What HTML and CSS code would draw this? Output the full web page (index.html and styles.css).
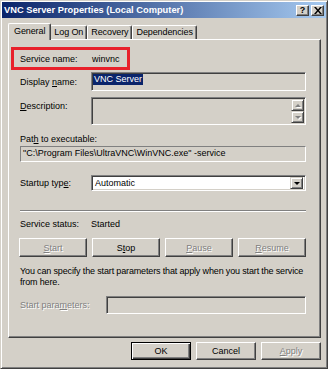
FILE: index.html
```html
<!DOCTYPE html>
<html lang="en">
<head>
    <meta charset="UTF-8">
    <title>VNC Server Properties (Local Computer)</title>
    <link rel="stylesheet" href="styles.css">
</head>
<body>
    <div class="window">
        <div class="titlebar">
            <span class="title">VNC Server Properties (Local Computer)</span>
            <div class="caption-btns">
                <span class="cap-btn help">?</span>
                <span class="cap-btn">
                    <svg width="8" height="7" viewBox="0 0 8 7"><path d="M0 0h2l2 2.5L6 0h2L5 3.5 8 7H6L4 4.5 2 7H0l3-3.5z" fill="#000"/></svg>
                </span>
            </div>
        </div>

        <div class="content">
            <div class="tabs">
                <div class="tab active">General</div>
                <div class="tab">Log On</div>
                <div class="tab">Recovery</div>
                <div class="tab">Dependencies</div>
            </div>

            <div class="panel">
                <div class="row service-name">
                    <span class="label">Service name:</span>
                    <span>winvnc</span>
                </div>

                <div class="row display-row">
                    <span class="label">Display <u>n</u>ame:</span>
                    <div class="field sunken grey display-field"><span class="selected">VNC Server</span></div>
                </div>

                <div class="row desc-row">
                    <span class="label desc-label"><u>D</u>escription:</span>
                    <div class="field sunken grey desc-field">
                        <div class="scrollbar">
                            <span class="scroll-btn"><span class="arrow up"></span></span>
                            <span class="scroll-btn"><span class="arrow down"></span></span>
                        </div>
                    </div>
                </div>

                <div class="path-label">Pat<u>h</u> to executable:</div>
                <div class="path-field">"C:\Program Files\UltraVNC\WinVNC.exe" -service</div>

                <div class="row startup-row">
                    <span class="label">Startup typ<u>e</u>:</span>
                    <div class="field sunken combo">
                        <span class="combo-text">Automatic</span>
                        <span class="combo-btn"><span class="arrow down black"></span></span>
                    </div>
                </div>

                <div class="separator"></div>

                <div class="row status-row">
                    <span class="label">Service status:</span>
                    <span>Started</span>
                </div>

                <div class="service-btns">
                    <button class="btn" disabled><u>S</u>tart</button>
                    <button class="btn">S<u>t</u>op</button>
                    <button class="btn" disabled><u>P</u>ause</button>
                    <button class="btn" disabled><u>R</u>esume</button>
                </div>

                <p class="hint">You can specify the start parameters that apply when you start the service<br>from here.</p>

                <div class="row params-row">
                    <span class="label params-label disabled">Start para<u>m</u>eters:</span>
                    <div class="field sunken grey params-field"></div>
                </div>
            </div>

            <div class="footer">
                <button class="btn default">OK</button>
                <button class="btn">Cancel</button>
                <button class="btn" disabled><u>A</u>pply</button>
            </div>
        </div>
    </div>
</body>
</html>
```

FILE: styles.css
```css
body {
    margin: 0;
    background: #d4d0c8;
    font-family: "Liberation Sans", Arial, sans-serif;
    font-size: 9px;
    color: #000;
}
.window {
    width: 328px;
    height: 369px;
    box-sizing: border-box;
    background: #d4d0c8;
    border: 1px solid;
    border-color: #d4d0c8 #404040 #404040 #d4d0c8;
    box-shadow: inset 1px 1px #fff, inset -1px -1px #808080;
    padding: 1px;
    display: flex;
    flex-direction: column;
}
.titlebar {
    height: 16px;
    background: linear-gradient(to right, #0a246a, #a6caf0);
    display: flex;
    align-items: center;
    justify-content: space-between;
    padding: 0 2px 0 2px;
}
.title {
    color: #fff;
    font-weight: bold;
    font-size: 9.3px;
}
.caption-btns {
    display: flex;
    gap: 2px;
}
.cap-btn {
    width: 13px;
    height: 11px;
    box-sizing: border-box;
    background: #d4d0c8;
    border: 1px solid;
    border-color: #fff #404040 #404040 #fff;
    box-shadow: inset -1px -1px #808080;
    display: flex;
    align-items: center;
    justify-content: center;
    font-weight: bold;
    font-size: 9px;
    line-height: 9px;
}
.content {
    flex: 1;
    display: flex;
    flex-direction: column;
    padding: 0 5px 0 6px;
}
.tabs {
    display: flex;
    align-items: flex-end;
    height: 21px;
    padding-left: 1px;
}
.tab {
    height: 14px;
    box-sizing: border-box;
    padding: 0 3px;
    line-height: 12px;
    letter-spacing: -0.1px;
    border-top: 1px solid #fff;
    border-left: 1px solid #fff;
    border-right: 1px solid #404040;
    box-shadow: inset -1px 0 #808080;
    border-radius: 2px 2px 0 0;
    background: #d4d0c8;
}
.tab.active {
    height: 17px;
    margin: 0 -2px -1px -1px;
    padding: 0 5px;
    line-height: 14px;
    position: relative;
    z-index: 1;
}
.tab.active + .tab {
    margin-left: 1px;
}
.panel {
    flex: 1;
    border: 1px solid;
    border-color: #fff #404040 #404040 #fff;
    box-shadow: inset -1px -1px #808080;
    padding: 7px 14px 0 11px;
    display: flex;
    flex-direction: column;
}
.row {
    display: flex;
    align-items: center;
}
.label {
    width: 71px;
    flex-shrink: 0;
}
.service-name {
    width: 119px;
    height: 23px;
    box-sizing: border-box;
    margin-left: -9px;
    border: 3px solid #e8202a;
    padding-left: 6px;
}
.service-name .label {
    width: 72px;
}
.field {
    flex: 1;
    box-sizing: border-box;
}
.sunken {
    border: 1px solid;
    border-color: #808080 #fff #fff #808080;
    box-shadow: inset 1px 1px #404040, inset -1px -1px #d4d0c8;
}
.grey {
    background: #d4d0c8;
}
.display-row {
    margin-top: 2px;
}
.display-field {
    height: 19px;
    padding: 1px 0 0 1px;
    line-height: 11px;
}
.selected {
    background: #0a246a;
    color: #fff;
    padding: 0 1px;
    display: inline-block;
}
.desc-row {
    margin-top: 6px;
    align-items: flex-start;
}
.desc-label {
    padding-top: 4px;
}
.desc-field {
    height: 28px;
    display: flex;
    justify-content: flex-end;
    padding: 1px 1px 1px 0;
}
.scrollbar {
    display: flex;
    flex-direction: column;
    width: 13px;
}
.scroll-btn, .combo-btn {
    flex: 1;
    box-sizing: border-box;
    background: #d4d0c8;
    border: 1px solid;
    border-color: #d4d0c8 #404040 #404040 #d4d0c8;
    box-shadow: inset 1px 1px #fff, inset -1px -1px #808080;
    display: flex;
    align-items: center;
    justify-content: center;
}
.arrow {
    width: 0;
    height: 0;
    border-left: 3px solid transparent;
    border-right: 3px solid transparent;
}
.arrow.up {
    border-bottom: 3px solid #808080;
    filter: drop-shadow(1px 1px 0 #fff);
}
.arrow.down {
    border-top: 3px solid #808080;
    filter: drop-shadow(1px 1px 0 #fff);
}
.arrow.down.black {
    border-top-color: #000;
    filter: none;
}
.path-label {
    margin-top: 8px;
    line-height: 12px;
}
.path-field {
    margin-top: 1px;
    height: 16px;
    box-sizing: border-box;
    border: 1px solid;
    border-color: #808080 #fff #fff #808080;
    padding-left: 2px;
    line-height: 13px;
}
.startup-row {
    margin-top: 13px;
}
.combo {
    height: 16px;
    background: #fff;
    display: flex;
    align-items: center;
    padding: 2px 2px 2px 3px;
}
.combo-text {
    flex: 1;
}
.combo-btn {
    flex: none;
    width: 13px;
    height: 12px;
}
.separator {
    margin-top: 19px;
    height: 0;
    border-top: 1px solid #808080;
    border-bottom: 1px solid #fff;
}
.status-row {
    margin-top: 6px;
    line-height: 12px;
}
.service-btns {
    margin-top: 8px;
    margin-left: -1px;
    display: grid;
    grid-template-columns: repeat(4, 1fr);
    gap: 5px;
}
.btn {
    height: 19px;
    box-sizing: border-box;
    background: #d4d0c8;
    border: 1px solid;
    border-color: #fff #404040 #404040 #fff;
    box-shadow: inset -1px -1px #808080;
    font-family: inherit;
    font-size: 9px;
    font-weight: normal;
    color: #000;
    padding: 0;
}
.btn:disabled, .disabled {
    color: #808080;
    text-shadow: 1px 1px 0 #fff;
}
.hint {
    margin: 9px 0 0;
    line-height: 11px;
    letter-spacing: -0.15px;
    white-space: nowrap;
}
.params-row {
    margin-top: 8px;
}
.params-label {
    width: 86px;
}
.params-field {
    height: 18px;
}
.footer {
    display: flex;
    justify-content: flex-end;
    gap: 5px;
    padding: 4px 0 7px;
}
.footer .btn {
    width: 60px;
    height: 18px;
}
.btn.default {
    border: 1px solid #000;
    box-shadow: inset 1px 1px #fff, inset -1px -1px #404040, inset -2px -2px #808080;
}
```
